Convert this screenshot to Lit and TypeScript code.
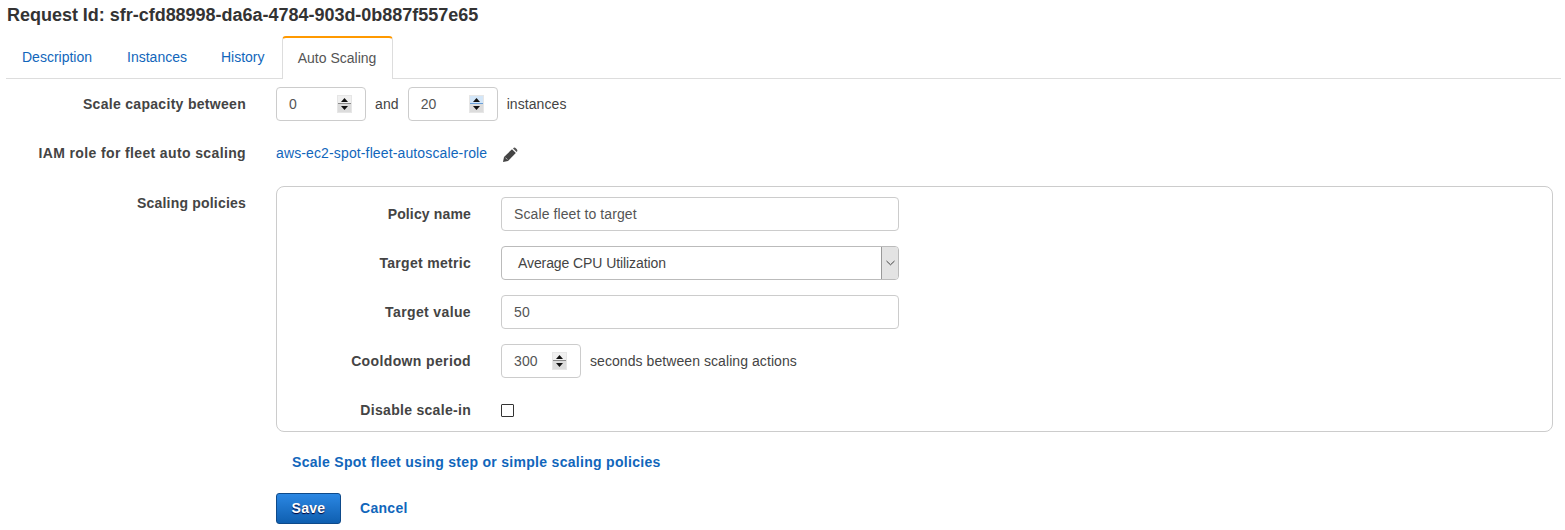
import { LitElement, html, css } from "lit";
import { customElement } from "lit/decorators.js";

const spinner = (tint = false) => html`<span class="spin ${tint ? "tint" : ""}">
  <span class="sbtn"><svg width="13" height="8" viewBox="0 0 13 8"><path d="M6.5 2 L10 6 L3 6 Z" fill="#111"/></svg></span>
  <span class="sbtn low"><svg width="13" height="7" viewBox="0 0 13 7"><path d="M3 2 L10 2 L6.5 6 Z" fill="#111"/></svg></span>
</span>`;

@customElement("app-root")
export class AppRoot extends LitElement {
  static styles = css`
    :host { display: block; width: 1565px; height: 530px; background: #fff; overflow: hidden;
      font-family: "Liberation Sans", Arial, sans-serif; font-size: 14px; color: #444; letter-spacing: 0.1px; }
    * { box-sizing: border-box; }
    .page { padding: 5px 4px 0 6px; }
    h1 { margin: 0 0 0 1px; font-size: 18px; line-height: 21px; font-weight: bold; color: #333; height: 31px; letter-spacing: -0.02px; }
    .tabs { display: flex; height: 43px; border-bottom: 1px solid #ddd; letter-spacing: 0; }
    .tab { padding: 0 17px; line-height: 43px; color: #1166bb; }
    .tab.first { padding: 0 18px 0 16px; }
    .tab.active { width: 111px; padding: 0; text-align: center; height: 43px; background: #fff;
      border: 1px solid #ddd; border-top: 2px solid #f90; border-bottom: 0; border-radius: 4px 4px 0 0;
      color: #555; line-height: 40px; }
    .form { display: grid; grid-template-columns: 240px 1fr; column-gap: 30px; margin-top: 8px; padding-right: 8px; }
    .label { font-weight: bold; text-align: right; color: #444; letter-spacing: 0.3px; }
    .tight { letter-spacing: 0.15px; }
    .mid { letter-spacing: 0.2px; }
    .wide { letter-spacing: 0.37px; }
    .r1 { height: 34px; line-height: 34px; }
    .ctrl { display: flex; align-items: center; height: 34px; }
    .num { width: 90px; height: 34px; border: 1px solid #ccc; border-radius: 4px; padding-left: 12px; display: flex;
      align-items: center; color: #555; }
    .num.short { width: 80px; }
    .num .v { flex: 1; }
    .spin { display: flex; flex-direction: column; width: 15px; height: 18px; margin-right: 13px; background: #e6e6e6; padding: 1px; }
    .sbtn { display: block; height: 8px; background: #f0f0f0; border-bottom: 1px solid #8a8a8a; line-height: 0; }
    .sbtn.low { height: 8px; border-bottom: 0; background: #dcdcdc; }
    .sbtn svg { display: block; }
    .spin.tint .sbtn:first-child { background: #d3e6f8; border-bottom-color: #6a9fd8; }
    .txt { margin: 0 9px; }
    .txt.last { margin-right: 0; letter-spacing: 0.07px; }
    .row2 { margin-top: 15px; }
    .link { color: #1166bb; letter-spacing: 0.13px; }
    .pencil { margin-left: 15px; margin-top: 3px; display: block; }
    .label.r3 { margin-top: 16px; padding-top: 7px; line-height: 20px; }
    .panel { margin-top: 16px; height: 246px; border: 1px solid #ccc; border-radius: 8px; padding-top: 10px;
      display: grid; grid-template-columns: 194px 398px; column-gap: 30px; row-gap: 15px; grid-auto-rows: 34px; align-content: start; }
    .panel .label { line-height: 34px; }
    .in { height: 34px; border: 1px solid #ccc; border-radius: 4px; padding-left: 12px; line-height: 32px; color: #555; }
    .sel { height: 34px; border: 1px solid #bbb; border-radius: 4px; padding-left: 16px; line-height: 32px; color: #444;
      display: flex; overflow: hidden; }
    .sel .t { flex: 1; letter-spacing: -0.09px; }
    .arrow { width: 17px; background: #e3e3e3; border-left: 1px solid #999; display: flex; align-items: center; justify-content: center; }
    .check { width: 13px; height: 13px; border: 1px solid #333; background: #fff; border-radius: 1px; }
    .policy { grid-column: 2; margin-top: 20px; padding-left: 16px; height: 20px; line-height: 20px; font-weight: bold; letter-spacing: 0.3px; color: #1166bb; }
    .actions { grid-column: 2; margin-top: 21px; display: flex; align-items: flex-start; }
    .save { width: 65px; height: 31px; border: 1px solid #0e4a8a; border-radius: 3px; background: linear-gradient(#2b87e3, #0f5fb0);
      color: #fff; font-weight: bold; text-align: center; line-height: 29px; letter-spacing: 0.3px; text-shadow: 0 1px 1px #003; }
    .cancel { margin-left: 19px; font-weight: bold; color: #1166bb; letter-spacing: 0.3px; line-height: 31px; }
  `;

  render() {
    return html`<div class="page">
      <h1>Request Id: sfr-cfd88998-da6a-4784-903d-0b887f557e65</h1>
      <div class="tabs">
        <span class="tab first">Description</span>
        <span class="tab">Instances</span>
        <span class="tab">History</span>
        <span class="tab active">Auto Scaling</span>
      </div>
      <div class="form">
        <div class="label r1">Scale capacity between</div>
        <div class="ctrl">
          <span class="num"><span class="v">0</span>${spinner()}</span>
          <span class="txt">and</span>
          <span class="num"><span class="v">20</span>${spinner(true)}</span>
          <span class="txt last">instances</span>
        </div>
        <div class="label r1 row2 wide">IAM role for fleet auto scaling</div>
        <div class="ctrl row2">
          <span class="link">aws-ec2-spot-fleet-autoscale-role</span>
          <svg class="pencil" width="16" height="16" viewBox="0 0 16 16">
            <path d="M1 15 L2 10 L10 2.2 L13.8 6 L6 14 Z" fill="#444"/>
            <path d="M11.2 1.2 C12 .4 13 .4 13.8 1.2 L14.8 2.2 C15.6 3 15.6 4 14.8 4.8 L14.6 5 L11 1.4 Z" fill="#555"/>
            <path d="M3.4 10.6 L5.4 12.6" stroke="#bbb" stroke-width="1"/>
          </svg>
        </div>
        <div class="label r3 mid">Scaling policies</div>
        <div class="panel">
          <div class="label tight">Policy name</div>
          <div class="in">Scale fleet to target</div>
          <div class="label">Target metric</div>
          <div class="sel"><span class="t">Average CPU Utilization</span>
            <span class="arrow"><svg width="9" height="6" viewBox="0 0 9 6"><path d="M.5 1 L4.5 4.8 L8.5 1" fill="none" stroke="#444" stroke-width="1"/></svg></span></div>
          <div class="label wide">Target value</div>
          <div class="in">50</div>
          <div class="label wide">Cooldown period</div>
          <div class="ctrl">
            <span class="num short"><span class="v">300</span>${spinner()}</span>
            <span class="txt last">seconds between scaling actions</span>
          </div>
          <div class="label">Disable scale-in</div>
          <div class="ctrl"><span class="check"></span></div>
        </div>
        <div class="policy">Scale Spot fleet using step or simple scaling policies</div>
        <div class="actions"><span class="save">Save</span><span class="cancel">Cancel</span></div>
      </div>
    </div>`;
  }
}
